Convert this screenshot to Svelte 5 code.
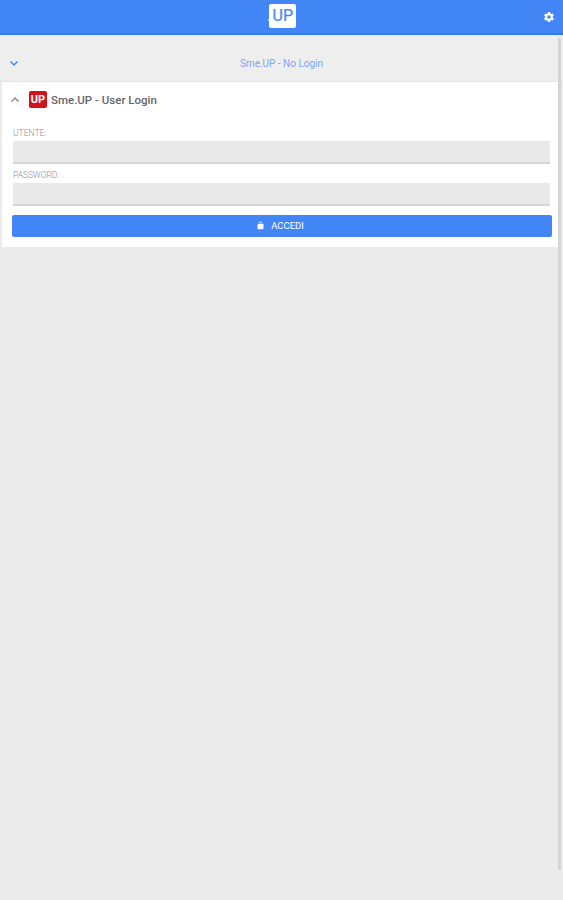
<script>
	let utente = $state('');
	let password = $state('');
</script>

<div class="page">
	<header class="topbar">
		<div class="logo"><span class="dot">.</span>UP</div>
		<svg class="gear" viewBox="0 0 24 24" aria-hidden="true">
			<path d="M19.4 13c.04-.33.06-.66.06-1s-.02-.67-.06-1l2.1-1.65c.2-.15.25-.42.12-.64l-2-3.46c-.12-.22-.39-.3-.61-.22l-2.49 1c-.52-.4-1.08-.73-1.69-.98l-.38-2.65A.49.49 0 0 0 14 2h-4c-.25 0-.46.18-.49.42l-.38 2.65c-.61.25-1.17.59-1.69.98l-2.49-1c-.23-.09-.49 0-.61.22l-2 3.46c-.13.22-.07.49.12.64L4.56 11c-.04.33-.06.67-.06 1s.02.67.06 1l-2.1 1.65c-.2.15-.25.42-.12.64l2 3.46c.12.22.39.3.61.22l2.49-1c.52.4 1.08.73 1.69.98l.38 2.65c.03.24.24.42.49.42h4c.25 0 .46-.18.49-.42l.38-2.65c.61-.25 1.17-.59 1.69-.98l2.49 1c.23.09.49 0 .61-.22l2-3.46c.12-.22.07-.49-.12-.64L19.4 13zM12 15.5a3.5 3.5 0 1 1 0-7 3.5 3.5 0 0 1 0 7z" />
		</svg>
	</header>

	<section class="row closed">
		<svg class="chevron blue" viewBox="0 0 24 24" aria-hidden="true"><path d="M5 9l7 7 7-7" /></svg>
		<span class="closed-title">Sme.UP - No Login</span>
	</section>

	<section class="card">
		<div class="row open">
			<svg class="chevron grey" viewBox="0 0 24 24" aria-hidden="true"><path d="M5 15l7-7 7 7" /></svg>
			<span class="badge">UP</span>
			<span class="open-title">Sme.UP - User Login</span>
		</div>
		<form class="form" onsubmit={(e) => e.preventDefault()}>
			<label>
				<span>UTENTE:</span>
				<input type="text" bind:value={utente} />
			</label>
			<label>
				<span>PASSWORD:</span>
				<input type="password" bind:value={password} />
			</label>
			<button type="submit">
				<svg viewBox="0 0 24 24" aria-hidden="true">
					<path d="M18 8h-1V6a5 5 0 0 0-10 0v2H6a2 2 0 0 0-2 2v10a2 2 0 0 0 2 2h12a2 2 0 0 0 2-2V10a2 2 0 0 0-2-2zM9 6a3 3 0 0 1 6 0v2H9V6z" />
				</svg>
				ACCEDI
			</button>
		</form>
	</section>

	<div class="scrollbar"></div>
</div>

<style>
	:global(body) {
		background: #ebebeb;
	}

	.page {
		position: relative;
		height: 900px;
		overflow: hidden;
		background: #ebebeb;
		font-family: Roboto, "Liberation Sans", sans-serif;
	}

	.topbar {
		position: relative;
		display: flex;
		justify-content: center;
		height: 33px;
		background: #4285f4;
		border-bottom: 2px solid #2f7bf0;
	}

	.logo {
		position: relative;
		width: 27px;
		height: 24px;
		margin-top: 4px;
		margin-left: 2px;
		border-radius: 2px;
		background: #fff;
		color: #4285f4;
		font-size: 16px;
		line-height: 24px;
		-webkit-text-stroke: 0.2px #4285f4;
		text-align: right;
		padding-right: 3px;
		box-sizing: border-box;
	}

	.dot {
		position: absolute;
		left: -2px;
		top: 0;
		color: #fff;
		-webkit-text-stroke: 0;
	}

	.gear {
		position: absolute;
		right: 8px;
		top: 11px;
		width: 12px;
		height: 12px;
		fill: #fff;
	}

	.row {
		position: relative;
		display: flex;
		align-items: center;
	}

	.closed {
		justify-content: center;
		height: 46px;
		background: #eeeeee;
		border-bottom: 1px solid #e4e4e4;
		box-sizing: border-box;
		margin-top: 1px;
		padding-top: 10px;
	}

	.closed-title {
		font-size: 10px;
		color: #7ea5ef;
	}

	.chevron {
		fill: none;
		stroke-width: 3;
		width: 12px;
		height: 12px;
	}

	.chevron.blue {
		position: absolute;
		left: 8px;
		top: 21px;
		stroke: #4285f4;
	}

	.chevron.grey {
		stroke: #8a8a8a;
		margin-left: 7px;
	}

	.card {
		margin: 0 5px 0 2px;
		height: 165px;
		background: #fff;
	}

	.open {
		height: 34px;
		padding-top: 1px;
		box-sizing: border-box;
	}

	.badge {
		width: 18px;
		height: 17px;
		margin-left: 8px;
		border-radius: 2px;
		background: #d3121d;
		color: #fff;
		font-size: 11px;
		font-weight: 700;
		line-height: 17px;
		text-align: center;
	}

	.open-title {
		margin-left: 4px;
		font-size: 11.5px;
		font-weight: 500;
		color: #666;
	}

	.form {
		display: flex;
		flex-direction: column;
		padding: 9px 6px 0 10px;
	}

	label {
		display: flex;
		flex-direction: column;
		margin: 0 2px 0 1px;
	}

	label span {
		font-size: 8.5px;
		font-weight: 300;
		line-height: 16px;
		color: #8f8f8f;
	}

	label + label span {
		margin-top: 3px;
		padding-top: 1px;
	}

	label + label {
		margin-top: -1px;
	}

	input {
		height: 23px;
		padding: 0;
		border: 0;
		border-bottom: 2px solid #d6d6d6;
		background: #e9e9e9;
		outline: none;
		box-sizing: border-box;
	}

	button {
		display: flex;
		align-items: center;
		justify-content: center;
		gap: 6px;
		height: 22px;
		margin-top: 9px;
		padding: 0 4px 2px 0;
		border: 0;
		border-radius: 2px;
		background: #4285f4;
		color: #fff;
		font-family: inherit;
		font-size: 9.5px;
		font-weight: 400;
	}

	button svg {
		width: 9px;
		height: 9px;
		fill: #fff;
	}

	.scrollbar {
		position: absolute;
		right: 2px;
		top: 38px;
		bottom: 30px;
		width: 3px;
		background: #d4d4d4;
		border-radius: 2px;
	}
</style>
